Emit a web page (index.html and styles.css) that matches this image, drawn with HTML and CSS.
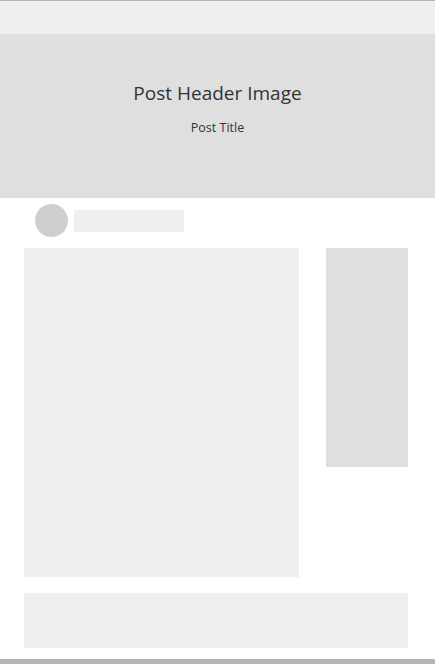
FILE: index.html
```html
<!DOCTYPE html>
<html>
<head>
<meta charset="utf-8">
<link rel="stylesheet" href="styles.css">
</head>
<body>
<div class="page">
  <div class="topbar"></div>
  <header class="hero">
    <div class="hero-title">Post Header Image</div>
    <div class="hero-sub">Post Title</div>
  </header>
  <div class="author">
    <div class="avatar"></div>
    <div class="name-ph"></div>
  </div>
  <div class="content">
    <div class="main-block"></div>
    <div class="side-block"></div>
  </div>
  <div class="footer-block"></div>
  <div class="bottom-edge"></div>
</div>
</body>
</html>
```

FILE: styles.css
```css
html, body {
  margin: 0;
  padding: 0;
  background: #ffffff;
}
.page {
  width: 435px;
  height: 664px;
  overflow: hidden;
  display: flex;
  flex-direction: column;
  font-family: "Open Sans", "Noto Sans", sans-serif;
  color: #333333;
}
.topbar {
  height: 33px;
  border-top: 1px solid #b4b4b4;
  background: #efefef;
  flex: none;
}
.hero {
  height: 164px;
  background: #dfdfdf;
  display: flex;
  flex-direction: column;
  align-items: center;
  flex: none;
}
.hero-title {
  margin-top: 45px;
  font-size: 19px;
  line-height: 28px;
}
.hero-sub {
  margin-top: 12px;
  font-size: 12.5px;
  line-height: 17px;
}
.author {
  display: flex;
  align-items: center;
  gap: 6px;
  padding: 6px 0 11px 35px;
  flex: none;
}
.avatar {
  width: 33px;
  height: 33px;
  border-radius: 50%;
  background: #cfcfcf;
}
.name-ph {
  width: 110px;
  height: 22px;
  background: #efefef;
}
.content {
  display: flex;
  align-items: flex-start;
  gap: 27px;
  padding: 0 27px 0 24px;
  flex: none;
}
.main-block {
  width: 275px;
  height: 329px;
  background: #efefef;
}
.side-block {
  width: 82px;
  height: 219px;
  background: #dfdfdf;
}
.footer-block {
  margin: 16px 27px 0 24px;
  height: 55px;
  background: #efefef;
  flex: none;
}
.bottom-edge {
  margin-top: 11px;
  height: 5px;
  background: #b4b4b4;
  flex: none;
}
```
